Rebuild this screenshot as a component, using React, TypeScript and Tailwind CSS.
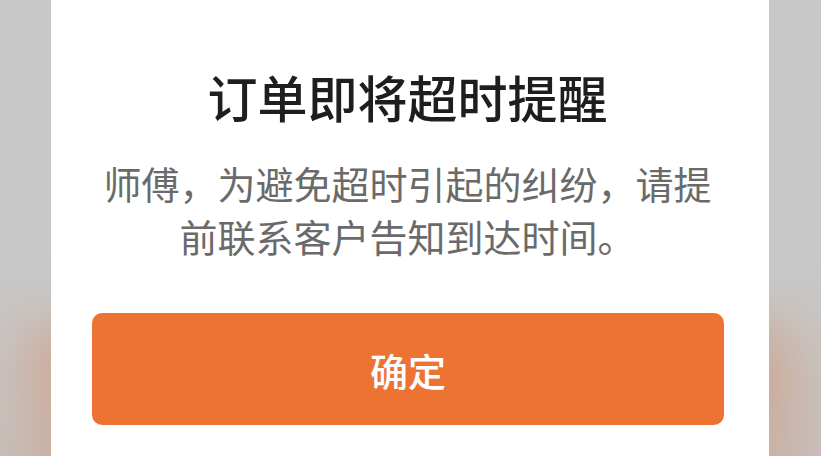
export default function App() {
  return (
    <div
      className="relative w-[821px] h-[456px] overflow-hidden bg-[#c8c8c8]"
      style={{ fontFamily: '"Noto Sans CJK SC", "Noto Sans", sans-serif' }}
    >
      {/* warm glow spilling out from behind the dialog's lower half */}
      <div className="absolute left-[30px] right-[30px] top-[330px] h-[240px] bg-[#d8875a] opacity-60 blur-[26px]" />
      <div className="absolute inset-x-0 bottom-0 h-[200px] bg-gradient-to-b from-transparent to-[#c6b8b2] opacity-60" />

      <div className="relative flex h-full">
        <div className="ml-[51px] w-[718px] h-full bg-white flex flex-col">
          <h1 className="mt-[61px] text-center text-[50px] leading-[70px] font-medium text-[#1e1e1e] pl-[41px] pr-[46px]">
            订单即将超时提醒
          </h1>
          <p className="mt-[25px] ml-[41px] w-[631px] text-center text-[38px] leading-[53px] text-[#6a6a6a]">
            师傅，为避免超时引起的纠纷，请提前联系客户告知到达时间。
          </p>
          <button className="mt-[51px] ml-[41px] w-[632px] h-[112px] rounded-[10px] bg-[#ec7332] text-white text-[38px] font-medium flex items-center justify-center">
            确定
          </button>
        </div>
      </div>
    </div>
  );
}
